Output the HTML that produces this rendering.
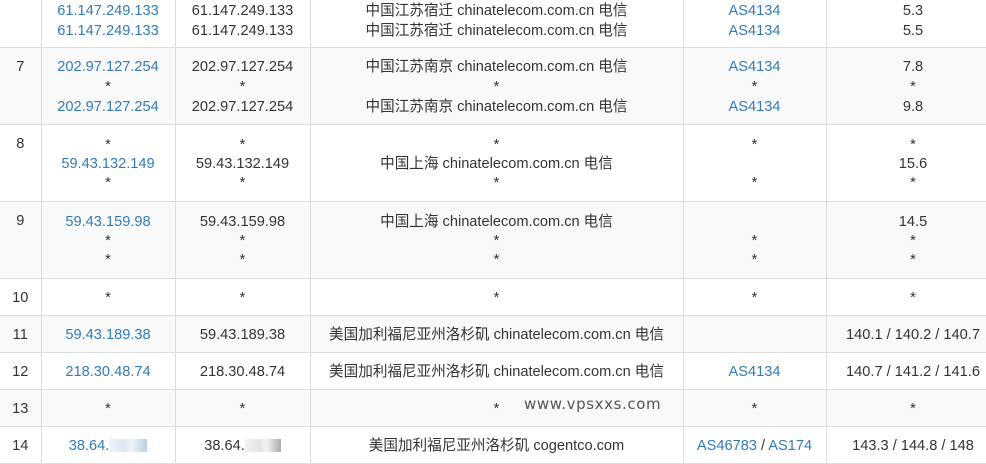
<!DOCTYPE html>
<html><head><meta charset="utf-8">
<style>
html,body{margin:0;padding:0;background:#fff;width:986px;height:464px;overflow:hidden;position:relative}
table{position:absolute;left:0;top:-9px;border-collapse:collapse;table-layout:fixed;width:1000px;
font-family:"Liberation Sans","Noto Sans CJK SC",sans-serif;font-size:14.6px;color:#333}
td{border:1px solid #ddd;text-align:center;vertical-align:middle;padding:2px 0 0 0;line-height:20px;white-space:nowrap;overflow:hidden}
td:first-child{border-left:none;vertical-align:top;padding-top:9px}
tr.one td:first-child{vertical-align:middle;padding-top:2px}
tr.g td{background:#f9f9f9}
.b{color:#337ab7}
tr.s td{line-height:19px}
tr.s td:first-child{padding-top:10px}
.bl{display:inline-block;width:38px;height:13px;vertical-align:-2px;background:linear-gradient(90deg,#eef3f8,#dde8f2 40%,#eef3f8 60%,#b9cfe4)}
.bg{display:inline-block;width:36px;height:13px;vertical-align:-2px;background:linear-gradient(90deg,#f2f2f2,#e4e4e4 40%,#f3f3f3 60%,#aaa)}
.wm{position:absolute;left:524px;top:395px;font-family:"DejaVu Sans","Liberation Sans",sans-serif;font-size:15px;color:#555;letter-spacing:0.6px}
</style></head><body>
<table>
<colgroup><col style="width:41px"><col style="width:134px"><col style="width:135px"><col style="width:373px"><col style="width:143px"><col style="width:174px"></colgroup>
<tr style="height:56px"><td></td><td class="b">61.147.249.133<br>61.147.249.133</td><td>61.147.249.133<br>61.147.249.133</td><td>中国江苏宿迁 chinatelecom.com.cn 电信<br>中国江苏宿迁 chinatelecom.com.cn 电信</td><td class="b">AS4134<br>AS4134</td><td>5.3<br>5.5</td></tr>
<tr class="g" style="height:77px"><td>7</td><td class="b">202.97.127.254<br><span style="color:#333">*</span><br>202.97.127.254</td><td>202.97.127.254<br>*<br>202.97.127.254</td><td>中国江苏南京 chinatelecom.com.cn 电信<br>*<br>中国江苏南京 chinatelecom.com.cn 电信</td><td class="b">AS4134<br><span style="color:#333">*</span><br>AS4134</td><td>7.8<br>*<br>9.8</td></tr>
<tr class="s" style="height:77px"><td>8</td><td class="b"><span style="color:#333">*</span><br>59.43.132.149<br><span style="color:#333">*</span></td><td>*<br>59.43.132.149<br>*</td><td>*<br>中国上海 chinatelecom.com.cn 电信<br>*</td><td>*<br>&nbsp;<br>*</td><td>*<br>15.6<br>*</td></tr>
<tr class="g s" style="height:77px"><td>9</td><td class="b">59.43.159.98<br><span style="color:#333">*</span><br><span style="color:#333">*</span></td><td>59.43.159.98<br>*<br>*</td><td>中国上海 chinatelecom.com.cn 电信<br>*<br>*</td><td>&nbsp;<br>*<br>*</td><td>14.5<br>*<br>*</td></tr>
<tr class="one" style="height:37px"><td>10</td><td>*</td><td>*</td><td>*</td><td>*</td><td>*</td></tr>
<tr class="g one" style="height:37px"><td>11</td><td class="b">59.43.189.38</td><td>59.43.189.38</td><td>美国加利福尼亚州洛杉矶 chinatelecom.com.cn 电信</td><td></td><td>140.1 / 140.2 / 140.7</td></tr>
<tr class="one" style="height:37px"><td>12</td><td class="b">218.30.48.74</td><td>218.30.48.74</td><td>美国加利福尼亚州洛杉矶 chinatelecom.com.cn 电信</td><td class="b">AS4134</td><td>140.7 / 141.2 / 141.6</td></tr>
<tr class="g one" style="height:37px"><td>13</td><td>*</td><td>*</td><td>*</td><td>*</td><td>*</td></tr>
<tr class="one" style="height:37px"><td>14</td><td class="b">38.64.<span class="bl"></span></td><td>38.64.<span class="bg"></span></td><td>美国加利福尼亚州洛杉矶 cogentco.com</td><td class="b">AS46783 <span style="color:#333">/</span> AS174</td><td>143.3 / 144.8 / 148</td></tr>
</table>
<div class="wm">www.vpsxxs.com</div>
</body></html>
